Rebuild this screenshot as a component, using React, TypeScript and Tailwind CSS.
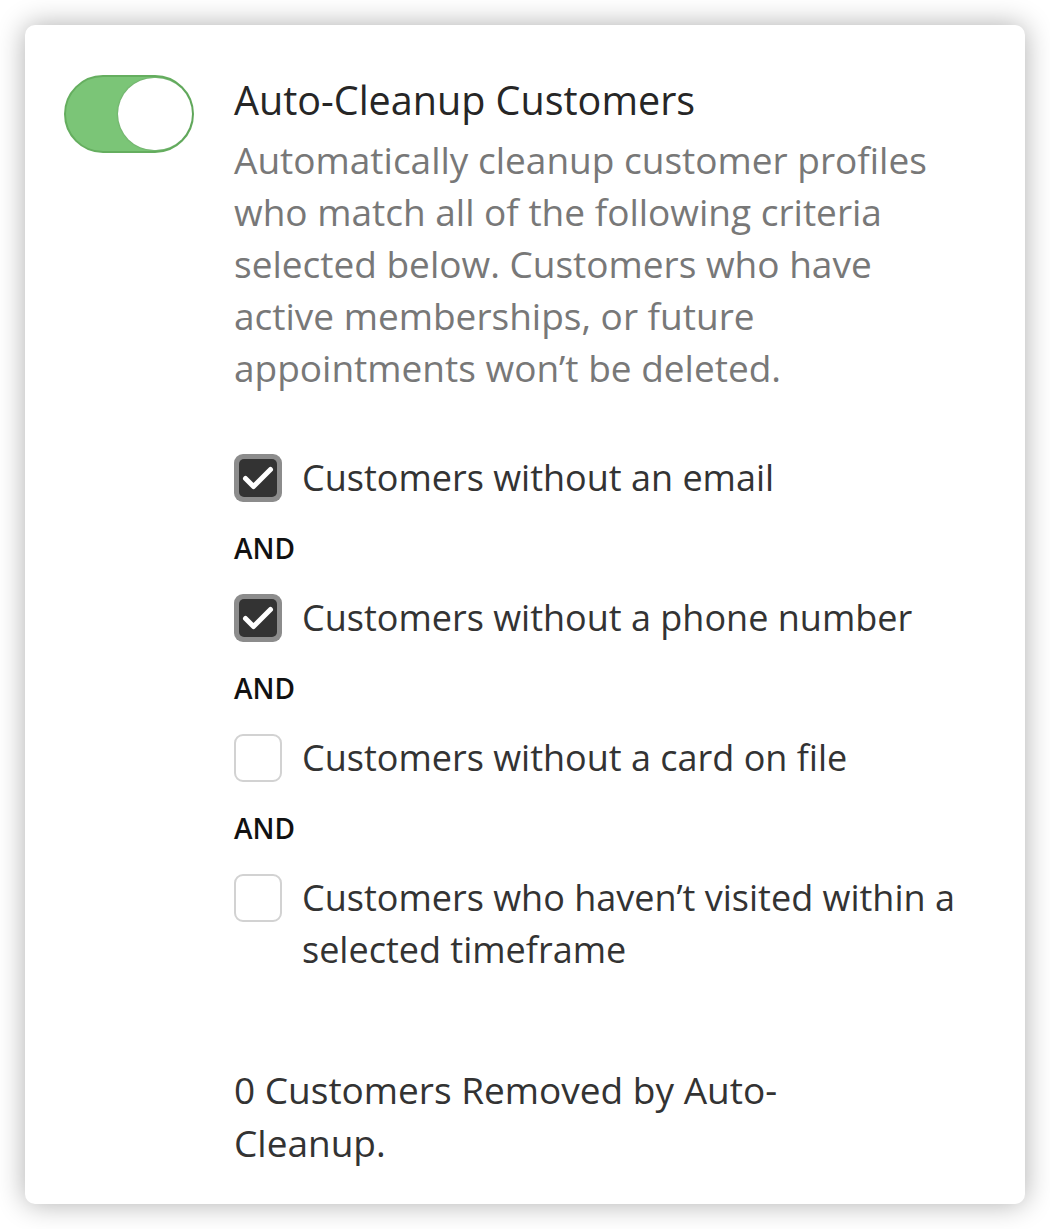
import React from "react";

function Checkbox({ checked }: { checked: boolean }) {
  if (checked) {
    return (
      <div className="w-[48px] h-[48px] shrink-0 rounded-[9px] bg-[#8c8c8c] p-[5px]">
        <div className="w-full h-full rounded-[5px] bg-[#333333] flex items-center justify-center">
          <svg width="32" height="26" viewBox="0 0 32 26" fill="none">
            <path d="M3.5 13.5 L11.5 21.5 L28.5 4.5" stroke="white" strokeWidth="5" strokeLinecap="round" strokeLinejoin="round" />
          </svg>
        </div>
      </div>
    );
  }
  return <div className="w-[48px] h-[48px] shrink-0 rounded-[9px] border-[2.5px] border-[#d2d2d2] bg-white" />;
}

function Row({ checked, children }: { checked: boolean; children: React.ReactNode }) {
  return (
    <div className="flex items-start gap-[20px]">
      <div className="h-[52px] flex items-center">
        <Checkbox checked={checked} />
      </div>
      <div className="text-[36px] leading-[52px] text-[#333333]">{children}</div>
    </div>
  );
}

function And() {
  return <div className="text-[28px] leading-[40px] font-semibold text-[#111111] my-[24px]">AND</div>;
}

export default function App() {
  return (
    <div className="w-[1050px] h-[1229px] bg-white pt-[25px] pl-[25px]" style={{ fontFamily: "'Open Sans', sans-serif" }}>
      <div className="w-[1000px] h-[1179px] bg-white rounded-[10px] shadow-[0_0_28px_rgba(0,0,0,0.32)] flex pt-[50px] pl-[39px] pr-[30px]">
        <div className="shrink-0">
          <div className="w-[130px] h-[78px] rounded-full bg-[#7bc577] border-[2px] border-[#65ae5f] relative">
            <div className="absolute right-[0px] top-[1px] w-[74px] h-[72px] rounded-full bg-white shadow-[0_0_2px_rgba(0,0,0,0.25)]" />
          </div>
        </div>
        <div className="ml-[40px] flex-1 -mt-[1px]">
          <div className="text-[39.5px] leading-[52px] font-medium text-[#262626]">Auto-Cleanup Customers</div>
          <div className="mt-[8px] text-[37px] leading-[52px] text-[#787878]">
            Automatically cleanup customer profiles
            <br />
            who match all of the following criteria
            <br />
            selected below. Customers who have
            <br />
            active memberships, or future
            <br />
            appointments won’t be deleted.
          </div>
          <div className="mt-[58px] flex flex-col">
            <Row checked>Customers without an email</Row>
            <And />
            <Row checked>Customers without a phone number</Row>
            <And />
            <Row checked={false}>Customers without a card on file</Row>
            <And />
            <Row checked={false}>
              Customers who haven’t visited within a
              <br />
              selected timeframe
            </Row>
          </div>
          <div className="mt-[87px] text-[37px] leading-[53px] text-[#333333]">
            0 Customers Removed by Auto-
            <br />
            Cleanup.
          </div>
        </div>
      </div>
    </div>
  );
}
